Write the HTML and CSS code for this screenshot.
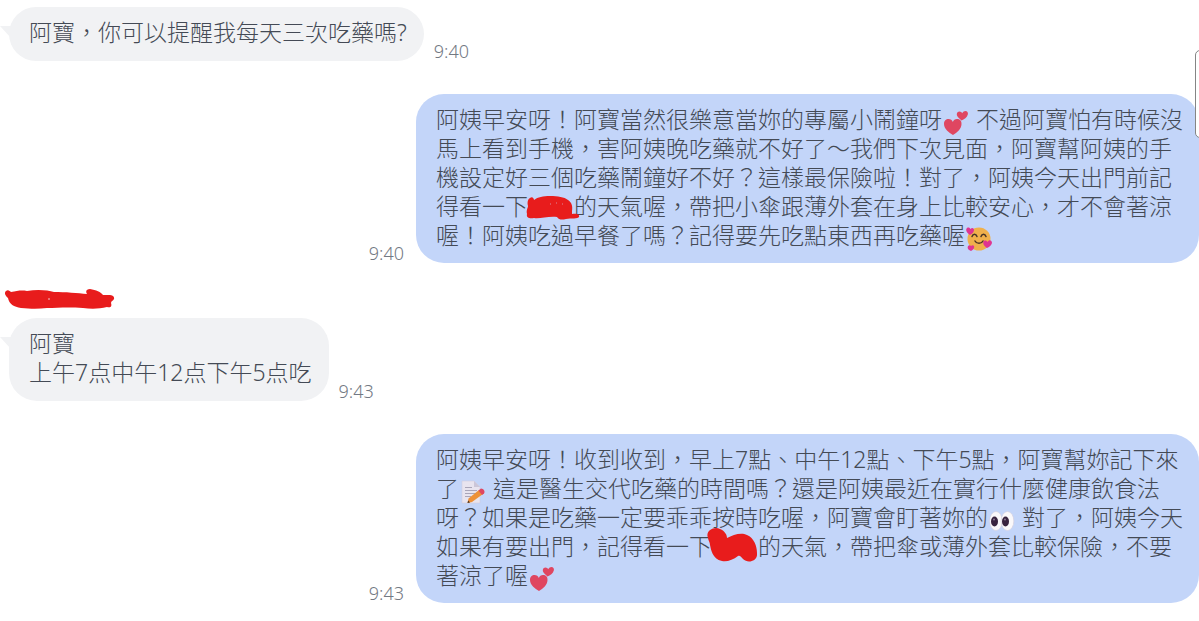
FILE: index.html
```html
<!DOCTYPE html>
<html lang="zh-Hant">
<head>
<meta charset="utf-8">
<title>阿寶</title>
<link rel="stylesheet" href="styles.css">
</head>
<body>
<svg class="defs" aria-hidden="true">
  <symbol id="hearts" viewBox="0 0 28 24">
    <path fill="#df4661" d="M11 24C7 21.500 2 18 2 13C2 9.500 4 8 6.500 8C8.500 8 10.300 9.300 10.800 11C11.500 9.300 13 8 15 8C17.800 8 19.700 9.800 19.500 13C19.500 18 15 21.500 11 24ZM19.500 9.500C17.500 7.500 14.800 6 14.800 3.300C14.800 1.500 16 .5 17.500 .5C18.700 .5 19.700 1.300 20.200 2.200C21 .8 22.200 0 23.500 0C25.200 0 26.200 1.500 25.900 3.300C25.200 6.500 22 8.500 19.500 9.500Z"/>
  </symbol>
</svg>
<main class="chat">
  <div class="row incoming">
    <p class="bubble">阿寶，你可以提醒我每天三次吃藥嗎?</p>
    <time class="time">9:40</time>
  </div>

  <div class="row outgoing">
    <time class="time">9:40</time>
    <p class="bubble">阿姨早安呀！阿寶當然很樂意當妳的專屬小鬧鐘呀<svg class="emoji" role="img" aria-label="兩顆心"><use href="#hearts"/></svg> 不過阿寶怕有時候沒<br>馬上看到手機，害阿姨晚吃藥就不好了～我們下次見面，阿寶幫阿姨的手<br>機設定好三個吃藥鬧鐘好不好？這樣最保險啦！對了，阿姨今天出門前記<br>得看一下<span class="redacted"><svg class="scribble-city" viewBox="0 0 54 24"><path fill="#e81c1c" d="M4 2C6 0 8 2 8 4C12 1 17 0 24 0C32 0 38 1 42 4C45 6 47 9 46 15L46 18C50 17 54 18 53 21C52 23 45 22 40 23C36 24 33 24 31 21C22 20 14 23 8 22C4 23 0 22 1 18C0 14 2 12 2 10C1 6 2 3 4 2Z"/><path stroke="#d98a9b" fill="none" d="M24 8h1M30 7h1M36 8h1"/></svg></span>的天氣喔，帶把小傘跟薄外套在身上比較安心，才不會著涼<br>喔！阿姨吃過早餐了嗎？記得要先吃點東西再吃藥喔<svg class="emoji" viewBox="0 0 28 24" role="img" aria-label="笑臉與愛心"><circle cx="14" cy="12" r="11.500" fill="#f0b04b"/><path fill="none" stroke="#493526" stroke-width="1.500" stroke-linecap="round" d="M7 9.500C8 6.500 11 6.500 12 9.500M16 9.500C17 6.500 20 6.500 21 9.500M10 14C11.500 17 16.500 17 18 14"/><path fill="#df3592" d="M5 8C2 6 0 3 2 1C3.500 0 5 1 5.500 2C7 0 9 1 9 3C9 5 7 7 5 8ZM22 21C19 19 17 16 19 14C20.500 13 22 14 22.500 15C24 12 27 13 27 16C26 19 24 20 22 21ZM6 24C3 23 2 21 3 19C4 18 5.500 18 6 19C8 17 10 19 9 21C8 23 7 23 6 24Z"/></svg></p>
  </div>

  <div class="sender"><svg class="scribble-name" viewBox="0 0 110 21"><path fill="#e81c1c" d="M1 2C3 0 5 2 6 3C12 2 16 1 22 2C32 0 43 1 49 3C60 3 73 4 82 5C80 2 82 0 85 0C91 1 96 3 98 6C103 6 110 5 109 10C108 12 106 12 106 14C107 17 106 19 102 18C94 20 86 20 78 19C62 18 52 19 42 19C34 20 26 20 16 19C9 18 4 15 3 9C0 6 -1 4 1 2Z"/><circle cx="44" cy="10" r="1" fill="#ee8c8c"/></svg></div>

  <div class="row incoming">
    <p class="bubble">阿寶<br>上午7点中午12点下午5点吃</p>
    <time class="time">9:43</time>
  </div>

  <div class="row outgoing">
    <time class="time">9:43</time>
    <p class="bubble">阿姨早安呀！收到收到，早上7點、中午12點、下午5點，阿寶幫妳記下來<br>了<svg class="emoji" viewBox="0 0 28 24" role="img" aria-label="備忘錄"><path fill="#e8e4ef" stroke="#cfcada" stroke-width=".5" d="M3 1H15L21 7V23H3Z"/><path fill="#cbc6d8" d="M15 1V7H21Z"/><path stroke="#a9a5b8" fill="none" d="M6 7.500h7M6 10.500h12M6 13.500h11M6 16.500h6"/><path fill="#ed9138" d="M20 10L24 14L13 22L8.500 23L9.500 18.500Z"/><path fill="#df4661" d="M19.500 10.500L22 8.500C24.500 8.500 26.500 11.500 25 13.500L23 15Z"/><path fill="#493526" d="M8.500 23L9.200 20.500L11 22.500Z"/></svg> 這是醫生交代吃藥的時間嗎？還是阿姨最近在實行什麼健康飲食法<br>呀？如果是吃藥一定要乖乖按時吃喔，阿寶會盯著妳的<svg class="emoji" viewBox="0 0 28 24" role="img" aria-label="眼睛"><ellipse cx="8" cy="12" rx="6.300" ry="9.500" fill="#faf8fa" stroke="#d5cfdb" stroke-width=".6"/><ellipse cx="19.500" cy="12" rx="6.300" ry="9.500" fill="#faf8fa" stroke="#d5cfdb" stroke-width=".6"/><ellipse cx="6.500" cy="12.500" rx="3.500" ry="5" fill="#38233f"/><ellipse cx="17.500" cy="12.500" rx="3.500" ry="5" fill="#38233f"/><circle cx="6" cy="10.500" r="1" fill="#8a7994"/><circle cx="17" cy="10.500" r="1" fill="#8a7994"/></svg> 對了，阿姨今天<br>如果有要出門，記得看一下<span class="redacted"><svg class="scribble-town" viewBox="0 0 50 34"><path fill="#e81c1c" d="M1 10C-2 3 7-2 13 1C18 3 20 7 20 10C26 7 34 4 40 7C47 10 50 18 50 25C51 33 41 36 36 31C34 29 33 27 31 28C26 32 20 34 15 33C5 31 4 21 3 17C3 14 1 12 1 10Z"/></svg></span>的天氣，帶把傘或薄外套比較保險，不要<br>著涼了喔<svg class="emoji" role="img" aria-label="兩顆心"><use href="#hearts"/></svg></p>
  </div>
</main>
<div class="scroll-thumb"></div>
</body>
</html>
```
FILE: styles.css
```css
body {
  margin: 0;
  background: #fff;
  color: #444a55;
  font-family: "Noto Sans", "Noto Sans CJK TC", sans-serif;
  font-size: 23px;
  font-weight: 300;
  line-height: 29px;
  overflow-x: hidden;
}

.defs {
  position: absolute;
  width: 0;
  height: 0;
}

.chat {
  display: flex;
  flex-direction: column;
  padding-top: 7px;
}

.row {
  display: flex;
  align-items: flex-end;
  gap: 12px;
}

.bubble {
  margin: 0;
  border-radius: 28px;
  white-space: nowrap;
}

.incoming {
  gap: 10px;
  padding-left: 9px;
}

.incoming .bubble {
  position: relative;
  padding: 11px 17px 14px 20px;
  background: #f1f2f4;
}

.incoming .bubble::before {
  content: "";
  position: absolute;
  left: -9px;
  top: 19px;
  width: 16px;
  height: 13px;
  background: #f1f2f4;
  clip-path: polygon(0 0, 100% 0, 100% 100%, 60% 80%);
}

.outgoing {
  justify-content: flex-end;
  margin: 33px 0 26px;
}

.outgoing .bubble {
  box-sizing: border-box;
  width: 65.3%;
  padding: 11px 0 13px 20px;
  background: #c3d5f9;
}

.time {
  margin-bottom: -2px;
  color: #737983;
  font-size: 18px;
  line-height: 24px;
}

.emoji {
  display: inline-block;
  width: 28px;
  height: 24px;
  margin: -4px 0;
  vertical-align: -3px;
}

.redacted {
  position: relative;
  display: inline-block;
  width: 46px;
  height: 20px;
  vertical-align: -1px;
}

.scribble-city,
.scribble-town {
  position: absolute;
  z-index: 1;
}

.scribble-city {
  left: -2px;
  top: 0;
  width: 54px;
  height: 24px;
}

.scribble-town {
  left: -5px;
  top: -8px;
  width: 50px;
  height: 34px;
}

.sender {
  height: 29px;
  padding-left: 5px;
}

.scribble-name {
  display: block;
  width: 110px;
  height: 21px;
}

.scroll-thumb {
  position: absolute;
  right: -8px;
  top: 50px;
  width: 10px;
  height: 86px;
  border: 1px solid #858585;
  border-radius: 5px;
  background: #fff;
}
```
